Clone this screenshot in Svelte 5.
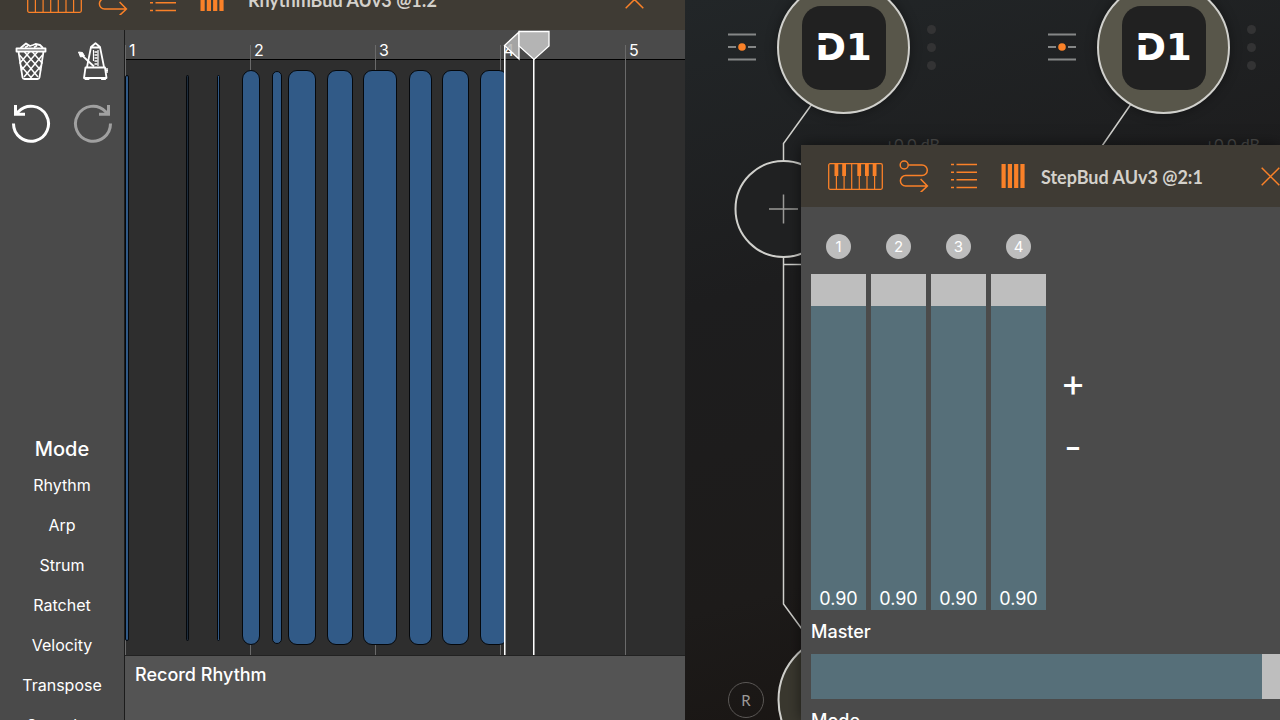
<script>
  let mode = $state("Rhythm");
  let steps = $state([0.904, 0.904, 0.904, 0.904]);
  let master = $state(0.902);

  const modes = ["Rhythm", "Arp", "Strum", "Ratchet", "Velocity", "Transpose", "Snapshot"];
  const bars = [1, 2, 3, 4, 5];
  const barWidth = 125;

  // notes on the roll, x and width in px from bar 1
  const notes = [
    { x: 0, w: 4, size: "thin" },
    { x: 61, w: 3, size: "thin ghost" },
    { x: 92, w: 3, size: "thin" },
    { x: 117, w: 18, size: "" },
    { x: 147, w: 10, size: "narrow" },
    { x: 163, w: 28, size: "" },
    { x: 202, w: 26, size: "" },
    { x: 238, w: 34, size: "" },
    { x: 284, w: 23, size: "" },
    { x: 317, w: 27, size: "" },
    { x: 355, w: 28, size: "" }
  ];

  const nodes = [
    { x: 92, label: "D1" },
    { x: 412, label: "D1" }
  ];

  function addStep() {
    steps.push(0.904);
  }

  function removeStep() {
    if (steps.length > 1) steps.pop();
  }
</script>

{#snippet toolbar(title, cls)}
  <header class="toolbar {cls}">
    <div class="tools">
      <button class="tool piano" aria-label="Keyboard">
        <svg width="55" height="27" viewBox="0 0 55 27">
          <rect x="0.7" y="0.7" width="53.6" height="25.6" rx="1.5" fill="none" stroke="currentColor" stroke-width="1.3" />
          <path d="M8.4 12V26M16.1 12V26M23.7 1V26M31.3 12V26M39 12V26M46.6 12V26" stroke="currentColor" stroke-width="1.2" />
          <path d="M6.5 1h3.8v12H6.5zM14.2 1H18v12h-3.8zM29.3 1h3.8v12h-3.8zM37 1h3.8v12H37zM44.7 1h3.8v12h-3.8z" fill="currentColor" />
        </svg>
      </button>
      <button class="tool route" aria-label="Routing">
        <svg width="30" height="32" viewBox="0 0 30 32" fill="none" stroke="currentColor" stroke-width="1.5">
          <circle cx="5.2" cy="5" r="4" />
          <path d="M9.4 5H23a5.3 5.3 0 0 1 0 10.6H6.6a5.2 5.2 0 0 0 0 10.4H28.4M21.6 19l6.8 7-6.8 6.4" />
        </svg>
      </button>
      <button class="tool list" aria-label="List">
        <svg width="26" height="26" viewBox="0 0 26 26" stroke="currentColor" stroke-width="1.4">
          <path d="M0 1.5h3M5.5 1.5H26M0 9.2h3M5.5 9.2H26M0 16.8h3M5.5 16.8H26M0 24.5h3M5.5 24.5H26" />
        </svg>
      </button>
      <button class="tool columns" aria-label="Columns">
        <svg width="24" height="24" viewBox="0 0 24 24" fill="currentColor">
          <path d="M0.5 0h4.2v24H0.5zM6.8 0H11v24H6.8zM13.1 0h4.2v24h-4.2zM19.4 0h4.2v24h-4.2z" />
        </svg>
      </button>
      <h1>{title}</h1>
      <button class="tool close" aria-label="Close">
        <svg width="19" height="19" viewBox="0 0 19 19" stroke="currentColor" stroke-width="1.5">
          <path d="M0.7 0.7L18.3 18.3M18.3 0.7L0.7 18.3" />
        </svg>
      </button>
    </div>
  </header>
{/snippet}

<main>
  <section class="rhythm">
    {@render toolbar("RhythmBud AUv3 @1:2", "cut")}
    <div class="body">
      <aside>
        <div class="actions">
          <button aria-label="Clear">
            <svg width="32" height="38" viewBox="0 0 32 38" fill="none" stroke="currentColor" stroke-width="1.8" stroke-linejoin="round">
              <path d="M1.5 6.5h29v3H1.5zM3.5 9.7L7.5 35.3q.3 1.7 2 1.7h13q1.7 0 2-1.7L28.5 9.7" />
              <path d="M5.5 6l5.5-4.5L15 4l3-1 2.500-1L25 3l3 3M10 5.5l3-1.7M19 5.5l3-2" />
              <path d="M4.5 13L23 35M9.5 10L26 28.5M17.5 10L27.5 21.5M5.5 23.5L16.5 36M27.5 13L9 35M22.5 10L6 28.5M14.5 10L4.5 21.5M26.5 23.5L15.5 36" stroke-width="1.5" />
            </svg>
          </button>
          <button aria-label="Metronome">
            <svg width="30" height="38" viewBox="0 0 30 38" fill="none" stroke="currentColor" stroke-width="1.8" stroke-linejoin="round">
              <path d="M9 25l4-20 4.5-3.7L22 5l4 20M13 5.5h9M7.5 25.500h19.5l1.5 10.500H6zM7.500 36v1.500h3V36M24 36v1.500h3V36" />
              <path d="M15.5 8v11M20 8v16" stroke-width="1.2" />
              <path d="M16.5 10h3M16.5 13h3M16.5 16h3M16.5 19h3M16.5 22h3" stroke-width="1.4" />
              <path d="M2 11.500L16 24.500" />
              <path d="M0.500 10l4 0.500 2 3.500-4 1z" fill="currentColor" stroke-width="1" />
              <path d="M28 28.500h2.500M29 26v5" stroke-width="1.400" />
            </svg>
          </button>
          <button aria-label="Undo">
            <svg width="40" height="40" viewBox="0 0 40 40" fill="none" stroke="currentColor" stroke-width="3">
              <path d="M2.500 19.500A17.500 17.500 0 1 0 7.500 7.500L5 10M4.500 1v9.200H14" />
            </svg>
          </button>
          <button aria-label="Redo" disabled>
            <svg width="40" height="40" viewBox="0 0 40 40" fill="none" stroke="currentColor" stroke-width="3">
              <path d="M37.500 19.500A17.500 17.500 0 1 1 32.500 7.500L35 10M35.500 1v9.200H26" />
            </svg>
          </button>
        </div>
        <nav>
          <h2>Mode</h2>
          {#each modes as m}
            <button aria-pressed={mode === m} onclick={() => (mode = m)}>{m}</button>
          {/each}
        </nav>
      </aside>

      <div class="editor">
        <div class="timeline">
          <div class="ruler"></div>
          <div class="roll"></div>
          {#each bars as bar, i}
            <div class="bar" style="left: {i * barWidth}px"><span>{bar}</span></div>
          {/each}
          <div class="notes">
            {#each notes as note}
              <div class="note {note.size}" style="left: {note.x}px; width: {note.w}px"></div>
            {/each}
          </div>
          <div class="loop-end"></div>
          <div class="playhead"></div>
          <svg class="handles" width="48" height="32" viewBox="0 0 48 32" stroke="#fff" stroke-width="1.3">
            <path d="M1.5 15.5L16 2v27z" fill="#b4b4b4" fill-opacity="0.85" />
            <path d="M16 1.5h30V16L31 29.5 16 16z" fill="#b4b4b4" />
          </svg>
        </div>
        <footer>Record Rhythm</footer>
      </div>
    </div>
  </section>

  <section class="host">
    <svg class="wires" width="595" height="720" viewBox="0 0 595 720" fill="none" stroke="#d0d0cc" stroke-width="1.5">
      <path d="M127 104L98.5 143.5V160M98.5 257V604L122 636M98.5 264.5H130M446 104L417 146" />
      <circle cx="98.5" cy="209" r="48" fill="#202122" stroke-width="2" />
      <path d="M84 209h29M98.5 194.5v29" stroke="#9a9a98" />
      <circle cx="159" cy="700" r="65.5" fill="#3a382f" stroke-width="2" />
    </svg>
    {#each nodes as node}
      <div class="node" style="left: {node.x}px">
        <button class="mixer" aria-label="Mixer">
          <svg width="28" height="28" viewBox="0 0 28 28" stroke="#858787" stroke-width="2">
            <path d="M0 1.5h28M0 14h8M20 14h8M0 26.5h28" />
            <circle cx="14" cy="14" r="3.8" fill="#fa8128" stroke="none" />
          </svg>
        </button>
        <button class="synth">
          <span>{node.label}</span>
        </button>
        <button class="more" aria-label="More">
          <i></i><i></i><i></i>
        </button>
        <p>+0.0 dB</p>
      </div>
    {/each}
    <button class="record">R</button>

    <div class="window">
      {@render toolbar("StepBud AUv3 @2:1", "")}
      <div class="stepper">
        <div class="steps">
          {#each steps as step, i}
            <div class="step">
              <label for="step{i}">{i + 1}</label>
              <div class="track">
                <input
                  id="step{i}"
                  type="range"
                  min="0"
                  max="1"
                  step="0.001"
                  bind:value={steps[i]}
                  style="--fill: {step * 100}%"
                />
                <output for="step{i}">{step.toFixed(2)}</output>
              </div>
            </div>
          {/each}
          <div class="count">
            <button aria-label="Add step" onclick={addStep}>+</button>
            <button aria-label="Remove step" onclick={removeStep}>-</button>
          </div>
        </div>
        <label class="caption" for="master">Master</label>
        <input
          id="master"
          type="range"
          min="0"
          max="1"
          step="0.001"
          bind:value={master}
          style="--fill: {master * 100}%"
        />
        <p class="caption">Mode</p>
      </div>
    </div>
  </section>
</main>

<style>
  :global(body) {
    background: #181615;
  }

  main {
    display: grid;
    grid-template-columns: 137fr 119fr;
    height: 100vh;
    overflow: hidden;
    font-family: Inter, "Liberation Sans", sans-serif;
    color: #fff;
  }

  button {
    padding: 0;
    border: 0;
    background: none;
    color: inherit;
    font: inherit;
    cursor: pointer;
  }

  svg {
    display: block;
  }

  h1, h2, p {
    margin: 0;
  }

  /* plugin title bar */
  .toolbar {
    display: flex;
    align-items: flex-end;
    flex: none;
    height: 62px;
    background: #3f3b34;
  }

  .toolbar.cut {
    height: 30px;
    overflow: hidden;
  }

  .tools {
    display: flex;
    align-items: center;
    flex: 1;
    height: 62px;
    padding-left: 27px;
  }

  .tool {
    color: #fa8128;
  }

  .route {
    margin-left: 16px;
  }

  .list {
    margin-left: 22px;
  }

  .columns {
    margin-left: 24px;
  }

  .toolbar h1 {
    margin-left: 16px;
    padding-top: 2px;
    font-family: Lato, sans-serif;
    font-size: 18px;
    font-weight: 700;
    white-space: nowrap;
    color: #d4d1cb;
  }

  .cut h1 {
    margin-left: 24px;
  }

  .close {
    margin-left: auto;
  }

  .cut .close {
    margin-right: 41px;
  }

  /* left plugin */
  .rhythm {
    display: flex;
    flex-direction: column;
    min-width: 0;
    min-height: 0;
  }

  .body {
    display: flex;
    flex: 1;
    min-height: 0;
  }

  aside {
    box-sizing: border-box;
    flex: none;
    width: 125px;
    border-right: 1px solid #1c1c1c;
    background: #4a4a4a;
    overflow: hidden;
  }

  .actions {
    display: grid;
    grid-template-columns: 62px 62px;
    grid-template-rows: 62px 64px;
  }

  .actions button {
    display: flex;
    align-items: center;
    justify-content: center;
  }

  .actions button:disabled {
    color: #a0a0a0;
  }

  nav {
    display: flex;
    flex-direction: column;
    margin-top: 278px;
  }

  nav h2 {
    font-size: 20px;
    font-weight: 500;
    line-height: 31px;
    text-align: center;
  }

  nav button {
    height: 40px;
    flex: none;
    font-size: 16px;
  }

  .editor {
    display: flex;
    flex-direction: column;
    flex: 1;
    min-width: 0;
  }

  .timeline {
    position: relative;
    display: flex;
    flex-direction: column;
    flex: 1;
    overflow: hidden;
  }

  .ruler {
    height: 29px;
    border-bottom: 1px solid #000;
    background: #4a4a4a;
  }

  .roll {
    flex: 1;
    background: #2e2e2e;
  }

  .bar {
    position: absolute;
    top: 15px;
    bottom: 0;
    border-left: 1px solid #6a6a6a;
  }

  .bar span {
    display: block;
    padding-left: 3px;
    font-size: 16px;
    line-height: 11px;
  }

  .notes {
    position: absolute;
    top: 40px;
    bottom: 10px;
    left: 0;
    width: 379px;
    overflow: hidden;
  }

  .note {
    position: absolute;
    top: 0;
    bottom: 0;
    box-sizing: border-box;
    border: 1px solid #05080c;
    border-radius: 9px;
    background: #315a87;
  }

  .narrow {
    top: 1px;
    bottom: 1px;
  }

  .thin {
    top: 5px;
    bottom: 4px;
  }

  .ghost {
    background: #1d2c3c;
  }

  .loop-end, .playhead {
    position: absolute;
    bottom: 0;
    width: 1px;
    border-right: 1px solid #fff8;
    background: #fff;
    background-clip: padding-box;
  }

  .loop-end {
    top: 15px;
    left: 379px;
  }

  .playhead {
    top: 29px;
    left: 408px;
  }

  .handles {
    position: absolute;
    top: 0;
    left: 378px;
  }

  footer {
    box-sizing: border-box;
    height: 65px;
    padding: 8px 10px;
    border-top: 1px solid #222;
    background: #545454;
    font-size: 18px;
    font-weight: 500;
    line-height: 22px;
  }

  /* host canvas */
  .host {
    position: relative;
    overflow: hidden;
    background: linear-gradient(165deg, #222628 0%, #1d1d1e 35%, #1d1b1a 70%, #17120f 100%);
  }

  .wires {
    position: absolute;
    top: 0;
    left: 0;
  }

  .node {
    position: absolute;
    top: -19px;
  }

  .synth {
    display: flex;
    align-items: center;
    justify-content: center;
    box-sizing: border-box;
    width: 133px;
    height: 133px;
    border: 2px solid #d0d0cc;
    border-radius: 50%;
    background: #58564a;
    box-shadow: 0 0 12px #0006;
  }

  .synth span {
    position: relative;
    width: 84px;
    border-radius: 19px;
    background: #212121;
    font-family: "DejaVu Sans", sans-serif;
    font-size: 37px;
    font-weight: 700;
    line-height: 84px;
  }

  /* notch in the logo's left stem */
  .synth span::after {
    content: "";
    position: absolute;
    top: 34px;
    left: 12px;
    width: 15px;
    height: 5px;
    background: #212121;
  }

  .mixer {
    position: absolute;
    top: 52px;
    left: -49px;
  }

  .more {
    position: absolute;
    top: 44px;
    left: 150px;
    display: grid;
    gap: 9px;
  }

  .more i {
    width: 9px;
    height: 9px;
    border-radius: 50%;
    background: #333334;
  }

  .node p {
    position: absolute;
    top: 153px;
    left: 108px;
    font-family: Lato, sans-serif;
    font-size: 16px;
    line-height: 20px;
    white-space: nowrap;
    color: #4a4a49;
  }

  .record {
    position: absolute;
    top: 682px;
    left: 43px;
    box-sizing: border-box;
    width: 36px;
    height: 36px;
    border: 1px solid #5a5755;
    border-radius: 50%;
    font-family: Lato, sans-serif;
    font-size: 15px;
    color: #9c9a98;
  }

  .window {
    position: absolute;
    top: 145px;
    right: 0;
    bottom: 0;
    left: 116px;
    background: #4b4b4b;
    box-shadow: 0 0 14px #0008;
    overflow: hidden;
  }

  .stepper {
    padding: 27px 0 0 10px;
  }

  .steps {
    display: flex;
    gap: 5px;
  }

  .step {
    display: flex;
    flex-direction: column;
    align-items: center;
    gap: 15px;
  }

  .step label {
    width: 25px;
    border-radius: 50%;
    background: #bdbdbd;
    font-size: 15px;
    line-height: 25px;
    text-align: center;
  }

  .track {
    position: relative;
  }

  input {
    display: block;
    appearance: none;
    margin: 0;
    background: linear-gradient(to right, #566f79 var(--fill), #bebebe var(--fill));
  }

  input::-webkit-slider-thumb {
    appearance: none;
    width: 1px;
    height: 1px;
  }

  .step input {
    width: 55px;
    height: 336px;
    writing-mode: vertical-lr;
    direction: rtl;
    background: linear-gradient(to top, #566f79 var(--fill), #bebebe var(--fill));
  }

  output {
    position: absolute;
    right: 0;
    bottom: 0;
    left: 0;
    font-size: 18px;
    line-height: 23px;
    text-align: center;
    pointer-events: none;
  }

  .count {
    display: flex;
    flex-direction: column;
    margin: 116px 0 0 7px;
  }

  .count button {
    width: 30px;
    height: 64px;
    font-size: 38px;
    line-height: 64px;
  }

  .caption {
    display: block;
    font-size: 18px;
    font-weight: 500;
    line-height: 44px;
  }

  #master {
    width: 500px;
    height: 45px;
  }
</style>
